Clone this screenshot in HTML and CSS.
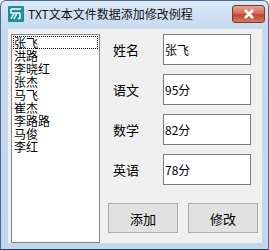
FILE: index.html
```html
<!DOCTYPE html>
<html lang="zh-CN">
<head>
    <meta charset="UTF-8">
    <title>TXT文本文件数据添加修改例程</title>
    <link rel="stylesheet" href="styles.css">
</head>
<body>

<div class="window">
    <div class="titlebar">
        <svg class="app-icon" width="16" height="16" viewBox="0 0 16 16">
            <rect x="0" y="0" width="16" height="16" rx="1" fill="#1f8e96"/>
            <path d="M3 3h10M3 3v4h9M6 7l-3 6M9 7l-3 6M12 7v5l-2 1" stroke="#fff" stroke-width="1.5" fill="none"/>
        </svg>
        <span class="title">TXT文本文件数据添加修改例程</span>
        <div class="close-btn">
            <svg width="12" height="10" viewBox="0 0 12 10">
                <path d="M2 1l8 8M10 1l-8 8" stroke="#fff" stroke-width="2.6"/>
            </svg>
        </div>
    </div>

    <div class="client">
        <div class="listbox">
            <div class="item focused">张飞</div>
            <div class="item">洪路</div>
            <div class="item">李晓红</div>
            <div class="item">张杰</div>
            <div class="item">马飞</div>
            <div class="item">崔杰</div>
            <div class="item">李路路</div>
            <div class="item">马俊</div>
            <div class="item">李红</div>
        </div>

        <div class="form">
            <div class="row">
                <label>姓名</label>
                <div class="textbox">张飞</div>
            </div>
            <div class="row">
                <label>语文</label>
                <div class="textbox">95分</div>
            </div>
            <div class="row">
                <label>数学</label>
                <div class="textbox">82分</div>
            </div>
            <div class="row">
                <label>英语</label>
                <div class="textbox">78分</div>
            </div>
            <div class="buttons">
                <button type="button">添加</button>
                <button type="button">修改</button>
            </div>
        </div>
    </div>
</div>

</body>
</html>
```
FILE: styles.css
```css
* {
    box-sizing: border-box;
}
body {
    margin: 0;
    font-family: "Noto Sans CJK SC", "Liberation Sans", sans-serif;
    font-size: 12px;
    color: #000;
    background: #fff;
}
.window {
    width: 269px;
    height: 250px;
    border: 1px solid #4a6d93;
    border-bottom-color: #24465f;
    border-radius: 6px 6px 0 0;
    background: linear-gradient(#dae7f5, #c6d9ef 30px, #c2d6ed);
    padding: 0 6px 6px 7px;
    display: flex;
    flex-direction: column;
}
.titlebar {
    height: 28px;
    display: flex;
    align-items: flex-start;
    margin-left: -3px;
    margin-right: -3px;
}
.app-icon {
    margin: 5px 4px 0 3px;
}
.title {
    font-size: 12px;
    line-height: 16px;
    margin-top: 5px;
    color: #111;
}
.close-btn {
    margin-left: auto;
    margin-top: 4px;
    width: 33px;
    height: 18px;
    border: 1px solid #7a3a35;
    border-radius: 3px;
    background: linear-gradient(#e8a493, #d3705b 45%, #c0452e 55%, #d27a62);
    display: flex;
    justify-content: center;
    align-items: center;
}
.client {
    flex: 1;
    background: #f0f0f0;
    display: flex;
    padding: 5px 0 0 3px;
    gap: 8px;
}
.listbox {
    width: 89px;
    background: #fff;
    border: 1px solid #828790;
    padding: 1px;
}
.item {
    height: 13px;
    line-height: 13px;
    padding-left: 1px;
    white-space: nowrap;
}
.item.focused {
    outline: 1px dotted #000;
    outline-offset: -1px;
}
.form {
    display: flex;
    flex-direction: column;
    gap: 9px;
}
.row {
    display: flex;
    align-items: center;
    height: 31px;
}
.row label {
    width: 55px;
    padding-left: 5px;
    font-size: 13px;
}
.textbox {
    width: 88px;
    height: 31px;
    background: #fff;
    border: 1px solid #7a7a7a;
    padding-left: 1px;
    line-height: 29px;
}
.buttons {
    display: flex;
    gap: 10px;
    margin-top: 9px;
}
button {
    width: 70px;
    height: 30px;
    background: #e1e1e1;
    border: 1px solid #adadad;
    font-family: inherit;
    font-size: 13px;
    padding: 0;
    color: #000;
}
```
